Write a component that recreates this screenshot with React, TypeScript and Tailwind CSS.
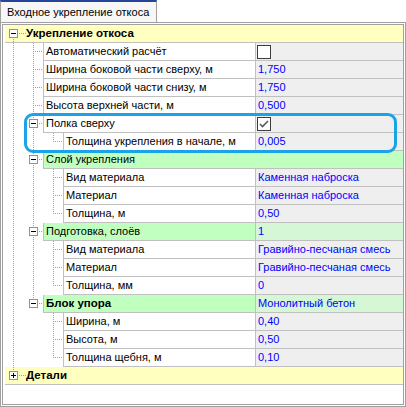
import React from "react";

type Guide = "v" | "t" | "l" | "box" | "boxLast" | " ";

type TreeRow =
  | { kind: "root"; label: string; open: boolean }
  | {
      kind: "item";
      guides: Guide[];
      label: string;
      value?: string;
      check?: boolean;
      tone?: "green" | "span";
      bold?: boolean;
    };

const DOT = { stroke: "#a0a0a0", strokeDasharray: "1 1" };

const rows: TreeRow[] = [
  { kind: "root", label: "Укрепление откоса", open: true },
  { kind: "item", guides: ["v", "t"], label: "Автоматический расчёт", check: false },
  { kind: "item", guides: ["v", "t"], label: "Ширина боковой части сверху, м", value: "1,750" },
  { kind: "item", guides: ["v", "t"], label: "Ширина боковой части снизу, м", value: "1,750" },
  { kind: "item", guides: ["v", "t"], label: "Высота верхней части, м", value: "0,500" },
  { kind: "item", guides: ["v", "box"], label: "Полка сверху", check: true },
  { kind: "item", guides: ["v", "v", "l"], label: "Толщина укрепления в начале, м", value: "0,005" },
  { kind: "item", guides: ["v", "box"], label: "Слой укрепления", tone: "span" },
  { kind: "item", guides: ["v", "v", "t"], label: "Вид материала", value: "Каменная наброска" },
  { kind: "item", guides: ["v", "v", "t"], label: "Материал", value: "Каменная наброска" },
  { kind: "item", guides: ["v", "v", "l"], label: "Толщина, м", value: "0,50" },
  { kind: "item", guides: ["v", "box"], label: "Подготовка, слоёв", value: "1", tone: "green" },
  { kind: "item", guides: ["v", "v", "t"], label: "Вид материала", value: "Гравийно-песчаная смесь" },
  { kind: "item", guides: ["v", "v", "t"], label: "Материал", value: "Гравийно-песчаная смесь" },
  { kind: "item", guides: ["v", "v", "l"], label: "Толщина, мм", value: "0" },
  { kind: "item", guides: ["v", "boxLast"], label: "Блок упора", value: "Монолитный бетон", tone: "green", bold: true },
  { kind: "item", guides: ["v", " ", "t"], label: "Ширина, м", value: "0,40" },
  { kind: "item", guides: ["v", " ", "t"], label: "Высота, м", value: "0,50" },
  { kind: "item", guides: ["v", " ", "l"], label: "Толщина щебня, м", value: "0,10" },
  { kind: "root", label: "Детали", open: false },
];

function Expander({ cx, open }: { cx: number; open: boolean }) {
  return (
    <g>
      <rect x={cx - 3.5} y={4.5} width={8} height={8} fill="#fff" stroke="#919191" />
      <line x1={cx - 2} y1={8.5} x2={cx + 3} y2={8.5} stroke="#000" />
      {!open && <line x1={cx + 0.5} y1={6} x2={cx + 0.5} y2={11} stroke="#000" />}
    </g>
  );
}

function GuideCol({ kind, cx }: { kind: Guide; cx: number }) {
  const x = cx + 0.5;
  if (kind === " ") return null;
  if (kind === "v") return <line x1={x} y1={0} x2={x} y2={18} {...DOT} />;
  if (kind === "t")
    return (
      <g>
        <line x1={x} y1={0} x2={x} y2={18} {...DOT} />
        <line x1={cx + 2} y1={8.5} x2={cx + 10} y2={8.5} {...DOT} />
      </g>
    );
  if (kind === "l")
    return (
      <g>
        <line x1={x} y1={0} x2={x} y2={9} {...DOT} />
        <line x1={cx + 2} y1={8.5} x2={cx + 10} y2={8.5} {...DOT} />
      </g>
    );
  return (
    <g>
      <line x1={x} y1={0} x2={x} y2={4} {...DOT} />
      {kind === "box" && <line x1={x} y1={14} x2={x} y2={18} {...DOT} />}
      <line x1={cx + 6} y1={8.5} x2={cx + 10} y2={8.5} {...DOT} />
      <Expander cx={cx} open />
    </g>
  );
}

function Gutter({ guides }: { guides: Guide[] }) {
  return (
    <svg width={guides.length * 20} height={18} className="shrink-0" shapeRendering="crispEdges">
      {guides.map((g, i) => (
        <GuideCol key={i} kind={g} cx={i * 20 + 10} />
      ))}
    </svg>
  );
}

function CheckBox({ checked }: { checked: boolean }) {
  return (
    <div className="-ml-px flex h-[14px] w-[14px] items-center justify-center border border-[#3c3c3c] bg-white">
      {checked && (
        <svg width="12" height="12" viewBox="0 0 12 12">
          <polyline points="2,6 4.5,8.5 10,3" fill="none" stroke="#5a5a5a" strokeWidth="1.6" />
        </svg>
      )}
    </div>
  );
}

function RootRow({ label, open }: { label: string; open: boolean }) {
  return (
    <div className="flex h-[18px] pl-[2px]">
      <div className="flex flex-1 items-center border-b border-[#c0c0c0] bg-[#ffffc0]">
        <svg width="21" height="17" viewBox="2 0 21 17" className="shrink-0" shapeRendering="crispEdges">
          {open ? (
            <line x1={10.5} y1={14} x2={10.5} y2={17} {...DOT} />
          ) : (
            <line x1={10.5} y1={0} x2={10.5} y2={4} {...DOT} />
          )}
          <line x1={16} y1={8.5} x2={23} y2={8.5} {...DOT} />
          <Expander cx={10} open={open} />
        </svg>
        <span className="text-[11.5px] font-bold">{label}</span>
      </div>
    </div>
  );
}

function ItemRow({ row }: { row: Extract<TreeRow, { kind: "item" }> }) {
  const labelBg = row.tone ? "bg-[#c0ffc0]" : "bg-white";
  const valueBg = row.tone === "green" ? "bg-[#d6f7d6]" : "bg-[#efefef]";

  return (
    <div className="flex h-[18px]">
      <Gutter guides={row.guides} />
      <div className="flex flex-1 border-b border-l border-[#c0c0c0]">
        <div className={`flex flex-1 items-center pl-[2px] ${labelBg} ${row.bold ? "text-[11.5px] font-bold" : ""}`}>
          {row.label}
        </div>
        {row.tone !== "span" && (
          <div className={`flex w-[148px] items-center border-l border-[#c0c0c0] pl-[2px] text-[#0000ff] ${valueBg}`}>
            {row.check !== undefined ? <CheckBox checked={row.check} /> : row.value}
          </div>
        )}
      </div>
    </div>
  );
}

export default function App() {
  return (
    <div className="relative h-[407px] w-[406px] overflow-hidden bg-white font-['Liberation_Sans',Arial,sans-serif] text-[11px] leading-none text-black">
      <div className="flex h-[22px]">
        <div className="flex w-[157px] items-center border-x border-t-2 border-x-[#a0a0a0] border-t-[#24479c] bg-[#f7f7f7] pl-[6px]">
          Входное укрепление откоса
        </div>
      </div>

      <div className="h-[385px] border border-[#a0a0a0] p-px">
        <div className="h-full border border-[#a0a0a0]">
          {rows.map((row, i) =>
            row.kind === "root" ? (
              <RootRow key={i} label={row.label} open={row.open} />
            ) : (
              <ItemRow key={i} row={row} />
            )
          )}
        </div>
      </div>

      <div className="pointer-events-none absolute left-[24px] top-[113px] h-[40px] w-[373px] rounded-[9px] border-[3px] border-[#1ba3e8]" />
    </div>
  );
}
